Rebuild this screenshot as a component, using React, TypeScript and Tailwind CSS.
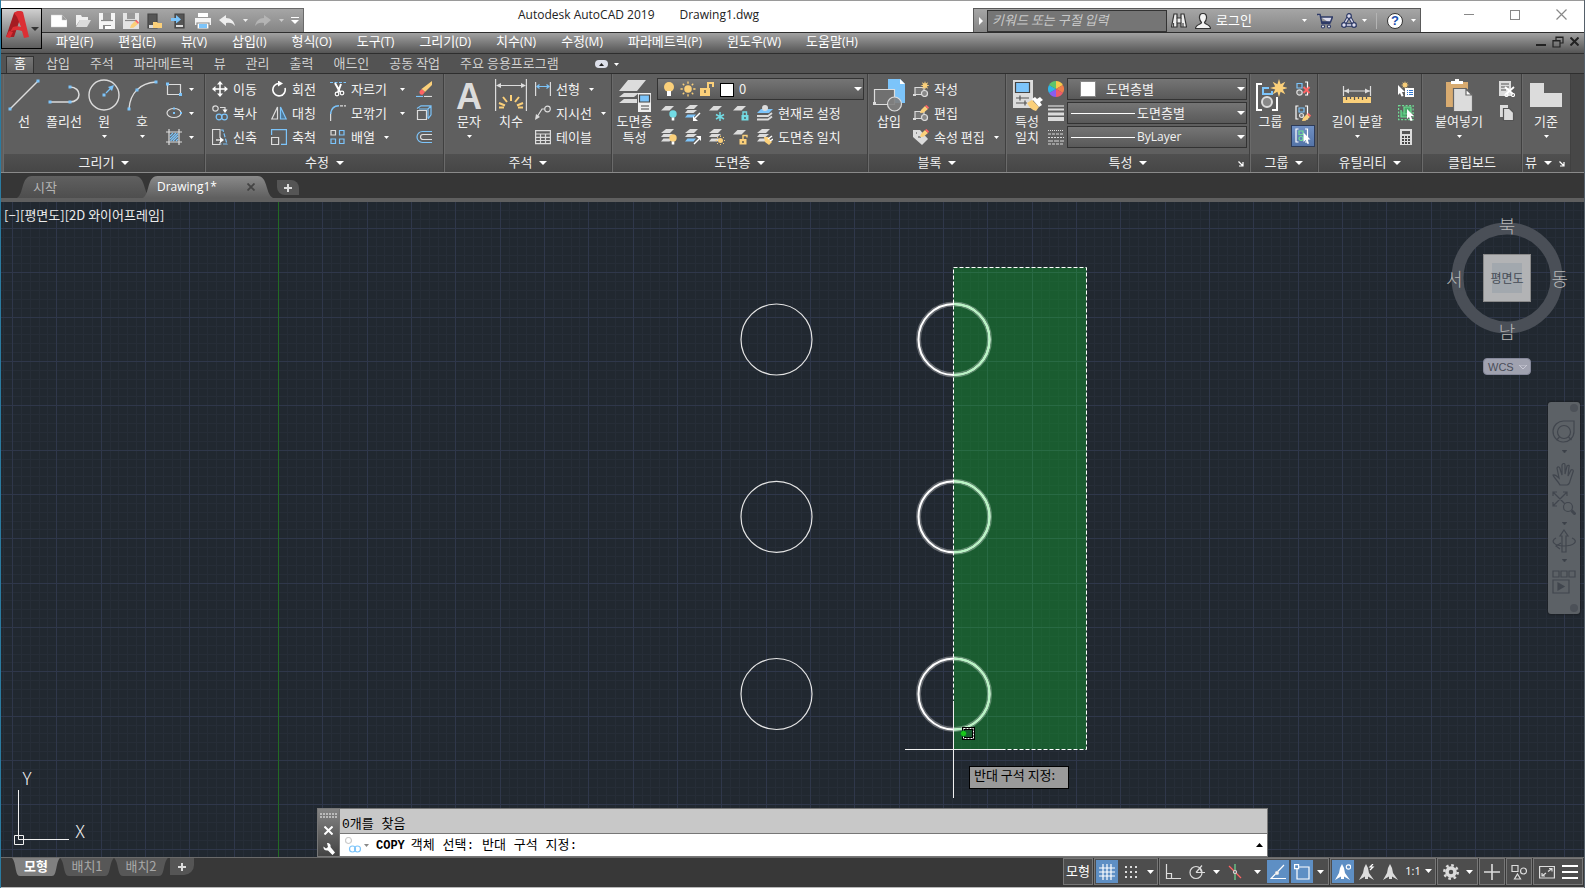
import type { ReactNode } from 'react';

const menus = [
  ['파일', '(F)'],
  ['편집', '(E)'],
  ['뷰', '(V)'],
  ['삽입', '(I)'],
  ['형식', '(O)'],
  ['도구', '(T)'],
  ['그리기', '(D)'],
  ['치수', '(N)'],
  ['수정', '(M)'],
  ['파라메트릭', '(P)'],
  ['윈도우', '(W)'],
  ['도움말', '(H)'],
];
const ribbonTabs = ['홈', '삽입', '주석', '파라메트릭', '뷰', '관리', '출력', '애드인', '공동 작업', '주요 응용프로그램'];

const L = '#dcdcdc';
const B = '#7cc4fa';
const Y = '#fbd07a';
const C = '#72dbe4';
const G = '#6fdc94';
const R = '#ff6464';

interface IconProps {
  children: ReactNode;
  className?: string;
  box?: string;
}

function Icon({ children, className = 'w-4 h-4', box = '0 0 16 16' }: IconProps) {
  return (
    <svg className={`${className} shrink-0`} viewBox={box} fill="none" stroke={L} strokeWidth="1.2" aria-hidden="true">
      {children}
    </svg>
  );
}

function Caret({ className = 'w-[5px] h-[3px] text-white' }: { className?: string }) {
  return (
    <svg className={`${className} shrink-0`} viewBox="0 0 8 4" preserveAspectRatio="none" fill="currentColor" aria-hidden="true">
      <path d="M0 0h8L4 4z" />
    </svg>
  );
}

/* ---------- shared icon parts ---------- */

const Dot = ({ x, y, s = 3 }: { x: number; y: number; s?: number }) => (
  <rect x={x - s / 2} y={y - s / 2} width={s} height={s} fill={B} stroke="none" />
);

const Burst = ({ x, y, r }: { x: number; y: number; r: number }) => (
  <g transform={`translate(${x} ${y}) scale(${r})`} fill={Y} stroke="none">
    <path d="M0-1 .18-.42.7-.7.42-.18 1 0 .42.18.7.7.18.42 0 1-.18.42-.7.7-.42.18-1 0-.42-.18-.7-.7-.18-.42z" />
  </g>
);

const Pencil = ({ x, y }: { x: number; y: number }) => (
  <g transform={`translate(${x} ${y})`} stroke="none">
    <path d="M0 8 1 5 5 1 8 4 3.500 7.800z" fill={Y} />
    <path d="M5 1 6.500 0 9 2.500 8 4z" fill={R} />
  </g>
);

const Sheets = ({ blue }: { blue?: boolean }) => (
  <g stroke="none">
    <path d="M5 0h8L9 4H0z" fill={L} />
    <path d="M2.500 5H12L8.500 8H0z" fill={L} />
    <path d="M2.500 9.500H11L8.500 12.500H0z" fill={blue ? B : L} />
  </g>
);

const Sheet = () => <path d="M4.500 1H13L8.500 5.500H0z" fill={L} stroke="none" />;

const Sun = ({ x, y, r, color = Y }: { x: number; y: number; r: number; color?: string }) => (
  <g transform={`translate(${x} ${y}) scale(${r})`} stroke={color} strokeWidth=".18">
    <circle r=".5" fill={color} stroke="none" />
    <path d="M0-1v.3M0 .7V1M-1 0h.3M.7 0H1M-.7-.7l.2.2M.5.500l.2.2M-.7.700l.2-.2M.5-.5l.2-.2" />
  </g>
);

const Bulb = ({ x, y, color }: { x: number; y: number; color: string }) => (
  <g transform={`translate(${x} ${y})`} stroke="none">
    <circle r="3.700" fill={color} />
    <rect x="-1.300" y="3.500" width="2.600" height="3" fill="#fff" />
  </g>
);

const Lock = ({ x, y, color, open }: { x: number; y: number; color: string; open?: boolean }) => (
  <g transform={`translate(${x} ${y})`}>
    <path d={open ? 'M3.500 0V-3.500h4V-1.500' : 'M1.500 0V-3h3.500V0'} stroke={color} strokeWidth="1.400" />
    <rect width="7" height="5.500" fill={color} stroke="none" />
    <path d="M3.500 2v2" stroke="#444" />
  </g>
);

const Arrow = ({ d }: { d: string }) => <path d={d} fill="#fff" stroke="none" />;

/* ---------- ribbon building blocks ---------- */

interface PanelProps {
  title: string;
  width: string;
  caret?: boolean;
  launcher?: boolean;
  narrow?: boolean;
  children: ReactNode;
}

function Panel({ title, width, caret = true, launcher, narrow, children }: PanelProps) {
  return (
    <section className={`${width} flex shrink-0 flex-col border-r border-[#404040] shadow-[inset_1px_0_0_#6a6a6a]`}>
      <div className="flex flex-1 pt-[3px]">{children}</div>
      <button className={`relative ml-px flex h-[18px] items-center justify-center gap-[7px] bg-linear-to-b from-[#505050] to-[#464646] pb-[2px] text-[#f0f0f0] ${narrow ? 'pr-4' : ''}`}>
        {title}
        {caret && <Caret className="mt-px h-1 w-2 text-white" />}
        {launcher && (
          <Icon className="absolute right-[5px] bottom-[5px] h-[6px] w-[6px]" box="0 0 6 6">
            <path d="M.5.500l4 4M5 1v4H1" stroke="#fff" />
          </Icon>
        )}
      </button>
    </section>
  );
}

interface BigButtonProps {
  icon: ReactNode;
  lines: string[];
  caret?: boolean;
  width: string;
}

function BigButton({ icon, lines, caret, width }: BigButtonProps) {
  return (
    <button className={`${width} flex shrink-0 flex-col items-center`}>
      {icon}
      <span className="whitespace-nowrap">
        {lines.map((line) => (
          <span key={line} className="block">{line}</span>
        ))}
      </span>
      {caret && <Caret className="mt-[6px] h-[3px] w-[5px] text-white" />}
    </button>
  );
}

interface RowButtonProps {
  icon: ReactNode;
  label?: string;
  caret?: boolean;
  wide?: boolean;
  title?: string;
}

function RowButton({ icon, label, caret, wide, title }: RowButtonProps) {
  return (
    <button aria-label={label ?? title} className={`flex h-6 items-center whitespace-nowrap ${label ? 'gap-[5px]' : 'gap-[3px]'}`}>
      {icon}
      {label && <span className="pb-px">{label}</span>}
      {caret && <Caret className={wide ? 'ml-2 h-[3px] w-[5px] text-white' : 'ml-1 h-[3px] w-[5px] text-white'} />}
    </button>
  );
}

function Column({ width, children }: { width?: string; children: ReactNode }) {
  return <div className={`${width ?? ''} flex shrink-0 flex-col items-start`}>{children}</div>;
}

/* ---------- ribbon panels ---------- */

function DrawPanel() {
  return (
    <Panel title="그리기" width="w-[202px]">
      <BigButton width="ml-px w-10" lines={['선']} icon={<Icon className="h-9 w-8" box="0 0 32 36"><path d="M2 32 30 4" strokeWidth="1.500" /><Dot x={2} y={32} /><Dot x={30} y={4} /></Icon>} />
      <BigButton width="w-10" lines={['폴리선']} icon={<Icon className="h-9 w-8" box="0 0 32 36"><path d="M2 25h20M22 10c12 0 12 15 0 15" strokeWidth="1.500" /><Dot x={2} y={25} /><Dot x={22} y={25} /><Dot x={22} y={10} /></Icon>} />
      <BigButton width="w-10" caret lines={['원']} icon={<Icon className="h-9 w-8" box="0 0 32 36"><circle cx="16" cy="18" r="15" strokeWidth="1.400" /><Dot x={16} y={18} /><path d="M18 16l6-6" stroke={B} /><path d="M26 8l-2 6-4-4z" fill={B} stroke="none" /></Icon>} />
      <BigButton width="w-9" caret lines={['호']} icon={<Icon className="h-9 w-8" box="0 0 32 36"><path d="M3 32C4 16 14 6 30 5" strokeWidth="1.400" /><Dot x={3} y={32} /><Dot x={11} y={13} /><Dot x={30} y={5} /></Icon>} />
      <Column width="pl-[6px]">
        <RowButton title="직사각형" caret icon={<Icon><path d="M1.500 3.500h13v10h-13z" /><Dot x={1.5} y={3} /><Dot x={14.5} y={13.5} /></Icon>} />
        <RowButton title="타원" caret icon={<Icon><ellipse cx="8" cy="8" rx="7" ry="4.500" /><Dot x={8} y={8} s={2} /><Dot x={15} y={8} s={2} /><Dot x={8} y={3.5} s={2} /></Icon>} />
        <RowButton title="해치" caret icon={<Icon><path d="M3 0v16M13 0v16M0 3h16M0 13h16" /><path d="M4 7l3-3M4 10l6-6M4.500 12 12 4.500M7 12l5-5M10 12l2-2" stroke={B} /></Icon>} />
      </Column>
    </Panel>
  );
}

function ModifyPanel() {
  return (
    <Panel title="수정" width="w-[239px]">
      <Column width="ml-[7px] w-[59px]">
        <RowButton label="이동" icon={<Icon><path d="M8 2v12M2 8h12" stroke="#fff" strokeWidth="1.500" /><Arrow d="M8 0l3 3.500H5zM8 16l3-3.500H5zM0 8l3.500-3v6zM16 8l-3.500-3v6z" /></Icon>} />
        <RowButton label="복사" icon={<Icon><circle cx="3.500" cy="3.500" r="2.700" /><path d="M8 2.500h5v3" /><Arrow d="M10.500 4.500h5L13 8z" /><circle cx="7" cy="12" r="2.800" stroke={B} /><circle cx="12.500" cy="12" r="2.800" stroke={B} /></Icon>} />
        <RowButton label="신축" icon={<Icon><path d="M8 9V.5H.5v15H8V13" /><path d="M4 11h5" stroke="#fff" /><Arrow d="M8 8l4 3-4 3z" /><path d="M9 1h2l4 14H9" stroke={B} strokeDasharray="4 1.500" /></Icon>} />
      </Column>
      <Column width="w-[59px]">
        <RowButton label="회전" icon={<Icon><path d="M8 2.500a6.200 6.200 0 1 0 6 4.500" stroke="#fff" strokeWidth="1.600" /><Arrow d="M7-.5l5 3-5 3z" /></Icon>} />
        <RowButton label="대칭" icon={<Icon><path d="M6.500 2v12H.8z" /><path d="M9.500 2v12h5.700z" stroke={B} fill="#4f7896" /></Icon>} />
        <RowButton label="축척" icon={<Icon><path d="M.6 6V.6h14.800v14.800H10" stroke={B} /><path d="M.6 8.500h7v7h-7z" /></Icon>} />
      </Column>
      <Column width="w-[85px]">
        <RowButton label="자르기" caret wide icon={<Icon><path d="M0 1.500h16" stroke={B} strokeDasharray="3 1.500" /><path d="M5 2l5 9M11 3l-3 8" stroke="#fff" strokeWidth="2" /><circle cx="7" cy="13" r="1.800" stroke="#fff" /><circle cx="12" cy="12" r="1.800" stroke="#fff" /></Icon>} />
        <RowButton label="모깎기" caret wide icon={<Icon><path d="M.6 16V8" /><path d="M.6 9C1 4 4 1 9 .8" stroke={B} strokeWidth="1.500" /><path d="M10 .8h6" strokeDasharray="3 1" /></Icon>} />
        <RowButton label="배열" caret icon={<Icon><path d="M1 1.500h4.500V6H1z" /><path d="M9.500 1.500H14V6H9.500zM1 10h4.500v4.500H1zM9.500 10H14v4.500H9.500z" stroke={B} /></Icon>} />
      </Column>
      <Column width="pl-px">
        <RowButton title="지우기" icon={<Icon><path d="M16 0v4L9 11 5.500 8z" fill={Y} stroke="none" /><path d="M5.500 8 9 11l-2 2.500c-2 1-4-.5-3.500-3z" fill={R} stroke="none" /><path d="M0 15.500h7" stroke={B} /><path d="M8 15.500h8" /></Icon>} />
        <RowButton title="분해" icon={<Icon><path d="M1.500 5.500h9v9h-9z" /><path d="M1 3.500 5 .8h10v9l-3 4M12 4l3-3M12 4H3M12 4v9" stroke={B} /></Icon>} />
        <RowButton title="간격띄우기" icon={<Icon><path d="M16 2.500H6.500a5.500 5.500 0 0 0 0 11H16" stroke={B} /><path d="M16 5.500H7a2.500 2.500 0 0 0 0 5h9" /></Icon>} />
      </Column>
    </Panel>
  );
}

function AnnotationPanel() {
  return (
    <Panel title="주석" width="w-[168px]">
      <BigButton width="ml-1 w-[42px]" caret lines={['문자']} icon={<span className="flex h-9 items-center pt-1 font-['Liberation_Sans'] text-[36px] leading-8 font-bold text-[#dcdcdc]">A</span>} />
      <BigButton width="w-[42px]" lines={['치수']} icon={<Icon className="h-9 w-8" box="0 0 32 36"><path d="M.6 2v32M31.400 2v32M2 8.500h28" /><path d="M1 8.500l5-2.500v5zM31 8.500l-5-2.500v5z" fill={L} stroke="none" /><path d="M16 18v6M8 20l4 5M24 20l-4 5M4 26l6 2.500M28 26l-6 2.500M4 30.500h5M23 30.500h5" stroke={Y} strokeWidth="2" /></Icon>} />
      <Column width="ml-[3px]">
        <RowButton label="선형" caret icon={<Icon><path d="M.6 1v14M15.400 1v14" /><path d="M2 5.500h12M4.500 3.500 2 5.500l2.500 2M11.500 3.500l2.500 2-2.500 2" stroke={B} /></Icon>} />
        <RowButton label="지시선" caret icon={<Icon><circle cx="12.500" cy="4" r="2.800" /><path d="M9.500 4H7L2 12" /><path d="M0 15l1-6 4 3z" fill={L} stroke="none" /></Icon>} />
        <RowButton label="테이블" icon={<Icon><path d="M.6 1.600h14.800v13H.6zM.6 5h14.800M.6 8.300h14.800M.6 11.500h14.800M5.500 5v9.500M10.500 5v9.500" /></Icon>} />
      </Column>
    </Panel>
  );
}

function LayersPanel() {
  return (
    <Panel title="도면층" width="w-[256px]">
      <BigButton
        width="w-[45px]"
        lines={['도면층', '특성']}
        icon={
          <Icon className="h-9 w-8" box="0 0 32 36">
            <g fill={L} stroke="none">
              <path d="M9 3h18L18 14H0zM5 16h15l-5 4H0zM5 22h13v4H0z" />
              <path d="M19 16h13v19H19z" fill="#eee" />
            </g>
            <path d="M20.500 18h10v7h-10z" fill={B} stroke="#444" />
            <path d="M22 29h8M22 32h8" stroke="#444" />
          </Icon>
        }
      />
      <div className="flex flex-1 flex-col pt-px">
        <div className="mr-[3px] flex h-[22px] items-center border border-[#333] bg-linear-to-b from-[#757575] to-[#595959] pl-1">
          <Icon className="h-5 w-[14px]" box="0 0 14 20"><circle cx="7" cy="8" r="5" fill={Y} stroke="none" /><path d="M5 12h4v5H5z" fill="#fff" stroke="none" /></Icon>
          <Icon className="ml-1 h-4 w-4"><Sun x={8} y={8} r={7.5} /></Icon>
          <Icon className="ml-[3px] h-4 w-4"><path d="M1 7h10v8H1z" fill={Y} stroke="none" /><path d="M9 7V2h5v4" stroke={Y} strokeWidth="2" /><path d="M6 9v3" stroke="#444" /></Icon>
          <span className="mt-px ml-[5px] h-[14px] w-[14px] border border-black bg-white" />
          <select aria-label="도면층" className="ml-[5px] flex-1 appearance-none bg-transparent pb-px outline-none">
            <option>0</option>
          </select>
          <Caret className="mr-[1px] h-1 w-2 text-white" />
        </div>
        <div className="mt-px flex h-6 items-center gap-2 pl-1">
          <Icon><Sheet /><Bulb x={12} y={9} color={C} /></Icon>
          <Icon><Sheets blue /><path d="M15 8l-5 5" stroke="#fff" strokeWidth="1.500" /><Arrow d="M8 16V11l5 5z" /></Icon>
          <Icon><Sheet /><path d="M11 7v9M7 9.500l8 4.500M15 9.500 7 14" stroke={C} strokeWidth="1.500" /></Icon>
          <Icon><Sheet /><Lock x={8.500} y={10} color={C} /></Icon>
          <RowButton label="현재로 설정" icon={<Icon><path d="M4 4h12l-4 4H0z" fill={B} stroke="none" /><circle cx="8" cy="3" r="3" fill={L} stroke="none" /><path d="M0 11h11l4-3M0 14.500h11l4-3" strokeWidth="1.800" /></Icon>} />
        </div>
        <div className="flex h-6 items-center gap-2 pl-1">
          <Icon><Sheets /><Bulb x={12} y={9} color={Y} /></Icon>
          <Icon><Sheets blue /><path d="M9 15l5-5" stroke="#fff" strokeWidth="1.500" /><Arrow d="M16 7v5l-5-5z" /></Icon>
          <Icon><Sheets /><Sun x={11.500} y={11.500} r={5} /></Icon>
          <Icon><Sheet /><Lock x={6.500} y={10} color={Y} open /></Icon>
          <RowButton label="도면층 일치" icon={<Icon><Sheets /><path d="M7 8l4 0 4 5-3 3-4-3z" fill={Y} stroke="none" /><path d="M11 10l4-3M13 12l3-2" stroke="#fff" strokeWidth="1.500" /></Icon>} />
        </div>
      </div>
    </Panel>
  );
}

const BlockBase = () => (
  <>
    <path d="M2 6.500h9v7H2z" fill="#777" />
    <path d="M0 13h3v2H0z" fill={L} stroke="none" />
    <circle cx="11.500" cy="12.500" r="3" fill="#888" />
  </>
);

function BlockPanel() {
  return (
    <Panel title="블록" width="w-[138px]">
      <BigButton width="w-[42px]" lines={['삽입']} icon={<Icon className="h-9 w-8" box="0 0 32 36"><path d="M15 2h12l5 5v19H15z" fill={B} stroke="none" /><path d="M27 2v5h5z" fill="#fff" stroke="none" /><path d="M1.500 12.500h20v15h-20z" fill="#707070" /><circle cx="21.500" cy="27" r="7" fill="#808080" fillOpacity=".9" /><path d="M0 25h3v3H0z" fill={L} stroke="none" /></Icon>} />
      <Column width="ml-[3px]">
        <RowButton label="작성" icon={<Icon><BlockBase /><Burst x={12} y={4.500} r={4.500} /></Icon>} />
        <RowButton label="편집" icon={<Icon><BlockBase /><Pencil x={7} y={0} /></Icon>} />
        <RowButton label="속성 편집" caret icon={<Icon><path d="M0 1h7l8 9-6 6-9-8z" fill={L} stroke="none" /><path d="M3 4h1M5 8h3" stroke="#444" /><Pencil x={7} y={0} /></Icon>} />
      </Column>
    </Panel>
  );
}

function PropertySelect({ label, value, swatch }: { label: string; value: string; swatch?: boolean }) {
  return (
    <div className="flex h-6 items-center">
      <div className="mr-[2px] flex h-[22px] flex-1 items-center border border-[#333] bg-linear-to-b from-[#757575] to-[#595959] pl-[3px]">
        {swatch ? <span className="mr-[10px] ml-[9px] h-4 w-4 border border-[#888] bg-white" /> : <span className="mr-[2px] h-px w-16 bg-white" />}
        <select aria-label={label} className={`min-w-0 flex-1 appearance-none bg-transparent pb-px outline-none ${value === 'ByLayer' ? "font-['Open_Sans'] text-xs" : ''}`}>
          <option>{value}</option>
        </select>
        <Caret className="mr-[1px] h-1 w-2 text-white" />
      </div>
    </div>
  );
}

function PropertiesPanel() {
  const wheel = ['#f9c84a', '#ef7d4b', '#ef5b6b', '#8a5cf0', '#30b5e8', '#5fc46b'];
  return (
    <Panel title="특성" width="w-[244px]" launcher>
      <BigButton
        width="w-[42px]"
        lines={['특성', '일치']}
        icon={
          <Icon className="h-9 w-8" box="0 0 32 36">
            <path d="M2 3h20v28H2z" fill={L} stroke="none" />
            <path d="M4.500 5.500h14v10h-14z" fill={B} stroke="#444" />
            <path d="M5 21h13M5 26h11M9 18.500v5M14 23.500v5" stroke="#555" />
            <path d="M16 26l5-3 7 7-3 4c-4-1-7-4-9-8z" fill={Y} stroke="none" />
            <path d="M21 22l3-2 2 2 3-2 3 3-3 2 2 3-3 2z" fill="#fff" stroke="none" />
          </Icon>
        }
      />
      <div className="flex w-[19px] flex-col">
        <RowButton title="색상" icon={<Icon>{wheel.map((c, i) => <path key={c} d="M8 8V0A8 8 0 0 1 14.900 4z" fill={c} stroke="none" transform={`rotate(${i * 60} 8 8)`} />)}</Icon>} />
        <RowButton title="선가중치" icon={<Icon><path d="M0 1h16" /><path d="M0 4.500h16" strokeWidth="2" /><path d="M0 9h16" strokeWidth="3" /><path d="M0 14h16" strokeWidth="4" /></Icon>} />
        <RowButton title="선종류" icon={<Icon><path d="M0 1.500h16" strokeDasharray="1 1" /><path d="M0 5h16" strokeDasharray="3 1" /><path d="M0 8.500h16" strokeDasharray="2 1" /><path d="M0 12h16" strokeDasharray="5 1" /><path d="M0 15h16" strokeDasharray="3 1" /></Icon>} />
      </div>
      <div className="flex flex-1 flex-col">
        <PropertySelect label="색상" value="도면층별" swatch />
        <PropertySelect label="선가중치" value="도면층별" />
        <PropertySelect label="선종류" value="ByLayer" />
      </div>
    </Panel>
  );
}

const Brackets = () => <path d="M3.500 1H1v13h2.500M10 1h2.500v13H10" stroke="#fff" />;

function GroupPanel() {
  return (
    <Panel title="그룹" width="w-[68px]">
      <BigButton width="w-[41px]" lines={['그룹']} icon={<Icon className="h-9 w-8" box="0 0 32 36"><path d="M7 7H2v26h5M17 33h5V20" stroke="#fff" strokeWidth="2" /><path d="M14 11H8v6h9v-3" stroke={B} strokeWidth="2" /><circle cx="12" cy="25" r="5" fill="#888" strokeWidth="2" /><Burst x={24} y={11} r={9} /></Icon>} />
      <Column>
        <span className="px-1"><RowButton title="그룹 해제" icon={<Icon><path d="M10 1h2.500v13H10" stroke="#fff" /><path d="M2 2.500h5V7H2z" stroke={B} /><circle cx="4.500" cy="11.500" r="2.700" fill="#777" /><path d="M8.500 6l6 6M14.500 6l-6 6" stroke={R} strokeWidth="2" /></Icon>} /></span>
        <span className="px-1"><RowButton title="그룹 편집" icon={<Icon><Brackets /><path d="M4 3h5v4H4z" stroke={B} /><circle cx="6.500" cy="10.500" r="2" fill="#777" /><Pencil x={7} y={8} /></Icon>} /></span>
        <span className="border border-[#2d3b58] bg-linear-to-b from-[#7090c4] to-[#5474a8] px-[3px]">
          <button aria-label="그룹 선택" className="flex h-5 items-center"><Icon><Brackets /><path d="M4 3h4v3.500H4z" stroke={G} /><circle cx="6" cy="10.500" r="2" stroke={G} /><Arrow d="M8.500 4.500l7 7h-3l1.500 4-1.500.5-1.700-4-2.300 2z" /></Icon></button>
        </span>
      </Column>
    </Panel>
  );
}

function UtilitiesPanel() {
  return (
    <Panel title="유틸리티" width="w-[104px]">
      <BigButton width="ml-[9px] w-[60px]" caret lines={['길이 분할']} icon={<Icon className="h-9 w-8" box="0 0 32 36"><path d="M2.500 9v10M29.500 9v10M3 14h26" /><path d="M3 14l5-2.500v5zM29 14l-5-2.500v5z" fill={L} stroke="none" /><path d="M2 20h28v6H2z" fill={Y} stroke="none" /><path d="M5.500 20v3M9.500 20v2M13.500 20v3M17.500 20v2M21.500 20v3M25.500 20v2" stroke="#555" /></Icon>} />
      <Column width="ml-[11px]">
        <RowButton title="신속 선택" icon={<Icon><Burst x={7} y={4} r={4} /><Arrow d="M0 4l7 7H4l1.500 4-2 .5L2 12l-2 2z" /><path d="M7 7h9v9H7z" fill="#fff" stroke="none" /><path d="M9 9.500h1M9 11.500h1M9 13.500h1M11 9.500h4M11 11.500h4M11 13.500h4" stroke="#37c" /></Icon>} />
        <RowButton title="모두 선택" icon={<Icon><path d="M.6.600h14.500v14H.6z" stroke={G} strokeDasharray="2 1.500" /><path d="M6 2h7v7H6zM3 5v7h7" stroke={G} fill="#4aa86a" /><Arrow d="M9 4l7 7h-3l1.500 4.500-2 .5-1.500-4-2 2z" /></Icon>} />
        <RowButton title="계산기" icon={<Icon><path d="M2 0h12v16H2z" fill={L} stroke="none" /><path d="M4 2h8v3H4z" fill="#555" stroke="none" /><path d="M4 8h8M4 11h8M4 14h8" stroke="#444" strokeWidth="2" strokeDasharray="2 1" /></Icon>} />
      </Column>
    </Panel>
  );
}

function ClipboardPanel() {
  return (
    <Panel title="클립보드" width="w-[100px]" caret={false}>
      <BigButton width="ml-2 w-[58px]" caret lines={['붙여넣기']} icon={<Icon className="h-9 w-8" box="0 0 32 36"><path d="M3 5h22v25H3z" fill="#d8ab70" stroke="none" /><path d="M8 7V4h4V2h4v2h4v3z" fill="#fff" stroke="none" /><path d="M10.500 11.500H23l6.500 6.500v16.500h-19z" fill={L} stroke="#666" /><path d="M23 12v6h6z" fill="#fff" stroke="#666" /></Icon>} />
      <Column width="ml-[11px]">
        <RowButton title="잘라내기" icon={<Icon><path d="M0 0h12v15H0z" fill={L} stroke="none" /><path d="M2 3h8M2 6h8M2 9h5" stroke="#555" /><path d="M6 6l8 7M15 6l-8 7" stroke="#fff" strokeWidth="1.800" /><circle cx="7.500" cy="14" r="1.500" stroke="#fff" /><circle cx="14" cy="14" r="1.500" stroke="#fff" /></Icon>} />
        <RowButton title="복사" icon={<Icon><path d="M1 0h8v12H1z" fill={L} stroke="none" /><path d="M4.500 3.500h6l4 4v8h-10z" fill={L} stroke="#555" /></Icon>} />
      </Column>
    </Panel>
  );
}

function ViewPanel() {
  return (
    <Panel title="뷰" width="w-[49px]" launcher narrow>
      <BigButton width="w-12" caret lines={['기준']} icon={<Icon className="h-9 w-8" box="0 0 32 36"><path d="M0 6h14v10h18v14H0z" fill={L} stroke="none" /></Icon>} />
    </Panel>
  );
}

/* ---------- title bar ---------- */

const quickIcons: { name: string; art: ReactNode }[] = [
  { name: '새로 만들기', art: <path d="M0 2h11l5 5v7H0zM11 2v5h5" fill="#fff" stroke="#ccc" strokeWidth=".5" /> },
  { name: '열기', art: <><path d="M1 13V2h5l1 2h6v3H5z" fill="#f0f0f0" stroke="none" /><path d="M5 7h11l-4 7H1z" fill="#dcdcdc" stroke="none" /></> },
  { name: '저장', art: <><path d="M0 0h16v16H0z" fill="#f4f4f4" stroke="none" /><path d="M4 0h8v7H4z" fill="#999" stroke="none" /><path d="M2 7.500h12" stroke="#888" /><path d="M4 12h8v4H4z" fill="#888" stroke="none" /><path d="M6 13h6v3H6z" fill="#fff" stroke="none" /></> },
  { name: '다른 이름으로 저장', art: <><path d="M0 0h16v16H0z" fill="#e4e4e4" stroke="none" /><path d="M4 0h8v6H4z" fill="#999" stroke="none" /><path d="M2 7.500h12" stroke="#888" /><Pencil x={7} y={7} /></> },
  { name: '웹에서 열기', art: <><path d="M1 1h9v14H1z" fill="#555" stroke="#444" /><path d="M2 12h8v3H2z" fill="#ddd" stroke="none" /><path d="M6 9h4l1 1h4v5H6z" fill={Y} stroke="none" /></> },
  { name: '웹에 저장', art: <><path d="M4 1h9v14H4z" fill="#555" stroke="#444" /><path d="M5 12h7v2H5z" fill="#ddd" stroke="none" /><path d="M0 5h5V2l5 4.500-5 4V8H0z" fill={B} stroke="none" /></> },
  { name: '인쇄', art: <><path d="M3 0h10v4H3z" fill="#fff" stroke="none" /><path d="M0 5h16v7H0z" fill="#f4f4f4" stroke="none" /><path d="M2 10h12v6H2z" fill="#fff" stroke="#888" /><path d="M4 11h8v4H4z" fill={B} stroke="none" /></> },
];

function QuickAccess() {
  return (
    <div className="flex h-6 items-center self-end border-t border-r border-[#6a6a6a] bg-linear-to-b from-[#a6a6a6] to-[#858585] pl-[46px]">
      {quickIcons.map(({ name, art }) => (
        <button key={name} aria-label={name} className="flex w-6 justify-center">
          <Icon>{art}</Icon>
        </button>
      ))}
      <button aria-label="명령취소" className="flex w-6 justify-center"><Icon><path d="M0 7l7-5v3c5 0 8 3 9 8-2-3-5-4-9-3v3z" fill="#eee" stroke="none" /></Icon></button>
      <button aria-label="명령취소 목록" className="flex w-3 justify-center"><Caret className="h-[3px] w-[5px] text-[#eee]" /></button>
      <button aria-label="명령복구" className="flex w-6 justify-center"><Icon><path d="M16 7 9 2v3C4 5 1 8 0 13c2-3 5-4 9-3v3z" fill="#b4b4b4" stroke="none" /></Icon></button>
      <button aria-label="명령복구 목록" className="flex w-3 justify-center"><Caret className="h-[3px] w-[5px] text-[#ccc]" /></button>
      <button aria-label="사용자화" className="flex w-4 flex-col items-center gap-[2px]"><span className="h-px w-2 bg-white" /><Caret className="h-1 w-2 text-white" /></button>
    </div>
  );
}

function InfoCenter() {
  return (
    <div className="flex h-6 items-center self-end border border-b-0 border-[#5a5a5a] bg-linear-to-b from-[#a6a6a6] to-[#858585] text-white">
      <button aria-label="축소" className="flex w-[13px] justify-center">
        <svg className="h-2 w-1" viewBox="0 0 4 8" fill="#fff"><path d="M0 0l4 4-4 4z" /></svg>
      </button>
      <input aria-label="검색" placeholder="키워드 또는 구절 입력" className="h-[22px] w-[180px] border border-[#333] bg-[#757575] px-1 pb-[2px] italic outline-none placeholder:text-[#c8c8c8]" />
      <button aria-label="찾기" className="ml-1">
        <Icon><path d="M3 1h3v4h4V1h3l2.500 13H10v-4H6v4H.5z" fill="#eee" stroke="#333" /><path d="M2.500 10v4M12 10v4M6 5v5M10 5v5" stroke="#444" /></Icon>
      </button>
      <button className="ml-2 flex items-center gap-[5px]">
        <Icon><path d="M8 .5c3 0 3.700 2 3.500 4.500C11.300 7.500 10 9 9.500 9.500c0 2 6 1.500 6 6H.5c0-4.500 6-4 6-6C6 9 4.700 7.500 4.500 5 4.300 2.500 5 .5 8 .5z" fill="#f4f4f4" stroke="#333" /></Icon>
        <span className="pb-[2px]">로그인</span>
      </button>
      <button aria-label="계정" className="ml-[46px] flex w-3 justify-center"><Caret /></button>
      <button aria-label="스토어" className="ml-[7px]">
        <Icon><path d="M0 1.500h3l2 9h8.500M4 4h11.500l-2 5H5" fill="#dde" stroke="#2e3a66" strokeWidth="1.500" /><circle cx="6" cy="13.500" r="1.500" fill="#fff" stroke="#2e3a66" /><circle cx="12" cy="13.500" r="1.500" fill="#fff" stroke="#2e3a66" /></Icon>
      </button>
      <button aria-label="연결" className="ml-2 flex items-center gap-[5px]">
        <Icon><path d="M8 3 3 12h10z" stroke="#2e3a66" strokeWidth="3.500" /><path d="M8 3 3 12h10z" stroke="#dde" strokeWidth="1.500" /><circle cx="8" cy="3" r="2.300" fill="#dde" stroke="#2e3a66" /><circle cx="3" cy="12" r="2.300" fill="#dde" stroke="#2e3a66" /><circle cx="13" cy="12" r="2.300" fill="#dde" stroke="#2e3a66" /></Icon>
        <Caret />
      </button>
      <span className="mr-[10px] ml-[9px] h-4 w-px bg-[#b4b4b4]" />
      <button aria-label="도움말" className="flex items-center gap-2 pr-1">
        <span className="flex h-4 w-4 items-center justify-center rounded-full border border-[#333] bg-white font-['Liberation_Sans'] text-[13px] leading-none font-bold text-[#1c4fb0]">?</span>
        <Caret />
      </button>
    </div>
  );
}

function TitleBar() {
  return (
    <header className="relative flex h-8 border-t border-[#9a9a9a] bg-white">
      <button aria-label="응용프로그램 메뉴" className="absolute top-[7px] left-0 z-10 flex h-[41px] w-[41px] items-center justify-between border border-black bg-linear-to-b from-[#d0d0d0] to-[#5e5e5e] pr-[2px] pb-2 pl-1">
        <svg className="h-7 w-6" viewBox="0 0 24 28" aria-hidden="true">
          <path d="M0 26 8 2l5-2 2 5-7 21z" fill="#a51c22" />
          <path d="M8 2c2-2 6-3 9-1l6 25-5 1-2-7c-5-2-9-1-12 1l3-5c3-1 5-1 8 0L11 6z" fill="#dc2f34" />
          <path d="M0 26l4 1 3-6-4-1z" fill="#dc2f34" />
        </svg>
        <Caret className="mt-2 h-1 w-2 text-[#333]" />
      </button>
      <QuickAccess />
      <h1 className="flex-1 pt-1 text-center font-['Open_Sans'] text-xs leading-5 whitespace-pre text-[#222]">{'Autodesk AutoCAD 2019        Drawing1.dwg'}</h1>
      <InfoCenter />
      <div className="flex pb-1 pl-[25px]">
        <button aria-label="최소화" className="flex w-[46px] items-center justify-center"><span className="h-px w-[10px] bg-[#888]" /></button>
        <button aria-label="최대화" className="flex w-[46px] items-center justify-center"><span className="h-[10px] w-[10px] border border-[#888]" /></button>
        <button aria-label="닫기" className="flex w-[46px] items-center justify-center"><Icon className="h-[11px] w-[11px]" box="0 0 11 11"><path d="M.5.500l10 10M10.500.500l-10 10" stroke="#888" /></Icon></button>
      </div>
    </header>
  );
}

function MenuBar() {
  return (
    <nav className="flex h-[22px] items-center gap-[25px] border-y border-[#2e2e2e] bg-linear-to-b from-[#a2a2a2] to-[#555] pr-[5px] pb-[3px] pl-[55px] text-white">
      {menus.map(([name, key]) => (
        <button key={name}>
          {name}
          <span className="font-['Open_Sans'] text-xs leading-4">{key}</span>
        </button>
      ))}
      <div className="ml-auto flex items-center gap-[6px]">
        <button aria-label="도면 최소화" className="mt-[6px] h-[2px] w-[10px] bg-[#222]" />
        <button aria-label="도면 복원"><Icon className="h-3 w-3" box="0 0 12 12"><path d="M4 4V1h7v6H8M1 4.500h7V11H1zM4 1.500h7M1 5h7" stroke="#222" /></Icon></button>
        <button aria-label="도면 닫기"><Icon className="h-[9px] w-[9px]" box="0 0 9 9"><path d="M.5.500l8 8M8.500.500l-8 8" stroke="#222" strokeWidth="2" /></Icon></button>
      </div>
    </nav>
  );
}

function RibbonTabs() {
  return (
    <nav className="flex h-[19px] items-end gap-1 bg-[#535353] pl-[5px] text-[#d0d0d0]">
      {ribbonTabs.map((tab, i) => (
        <button key={tab} className={i === 0 ? 'flex h-[17px] items-center border border-b-0 border-[#333] bg-linear-to-b from-[#777] to-[#5f5f5f] px-[7px] pb-1 text-white' : 'flex h-[17px] items-center px-2 pb-[3px]'}>
          {tab}
        </button>
      ))}
      <button aria-label="리본 최소화" className="ml-6 flex h-[18px] items-center gap-[6px]">
        <span className="flex h-2 w-[13px] items-center justify-center rounded-sm bg-[#dde0ea]"><Caret className="h-[3px] w-[5px] rotate-180 text-[#222]" /></span>
        <Caret />
      </button>
    </nav>
  );
}

/* ---------- drawing area ---------- */

function DocTab({ label, active }: { label: string; active?: boolean }) {
  return (
    <div className={`relative flex h-[22px] items-center justify-between ${active ? "-ml-2 w-[130px] pr-[18px] pl-[14px] font-['Open_Sans'] text-xs text-white" : 'w-[134px] pr-[22px] pl-4 text-[#b4b4b4]'}`}>
      <svg className="absolute inset-0 h-full w-full" viewBox="0 0 134 22" preserveAspectRatio="none" aria-hidden="true">
        <defs>
          <linearGradient id={active ? 'tab-on' : 'tab-off'} x2="0" y2="1">
            <stop stopColor={active ? '#8a8a8a' : '#606060'} />
            <stop offset="1" stopColor={active ? '#5f5f5f' : '#4e4e4e'} />
          </linearGradient>
        </defs>
        <path d="M0 22C7 18 4 0 15 0h103c11 0 8 18 16 22z" fill={active ? 'url(#tab-on)' : 'url(#tab-off)'} />
      </svg>
      <button className="relative pb-px">{label}</button>
      {active && (
        <button aria-label="탭 닫기" className="relative"><Icon className="h-2 w-2" box="0 0 8 8"><path d="M.5.500l7 7M7.500.500l-7 7" stroke="#444" strokeWidth="1.800" /></Icon></button>
      )}
    </div>
  );
}

const STEP = 133 / 3;

function gridLines(start: number, step: number, end: number, vertical: boolean) {
  let d = '';
  for (let p = start; p < end; p += step) {
    const at = Math.round(p) + 0.5;
    d += vertical ? `M${at} 0V3000` : `M0 ${at}H4000`;
  }
  return d;
}

const minorGrid = gridLines(11 - STEP, STEP / 5, 4000, true) + gridLines(26 - STEP, STEP / 5, 3000, false);
const majorGrid = gridLines(11, STEP, 4000, true) + gridLines(26, STEP, 3000, false);
const rows = [137.5, 314.8, 492];

function Drawing() {
  return (
    <svg className="absolute inset-0 h-full w-full" fill="none" aria-hidden="true">
      <path d={minorGrid} stroke="#262d37" />
      <path d={majorGrid} stroke="#2f374a" />
      <path d="M277.500 0V3000" stroke="#226a22" />
      <clipPath id="picked">
        <rect x="953" y="66" width="133" height="482" />
      </clipPath>
      <rect x="952.500" y="65.500" width="133" height="482" fill="#1a5c30" />
      <g clipPath="url(#picked)">
        <path d={minorGrid} stroke="#1d5f34" />
        <path d={majorGrid} stroke="#286a44" />
      </g>
      {rows.map((y) => (
        <g key={y}>
          <circle cx="775.500" cy={y} r="35.500" stroke="#e4e4e4" strokeWidth="1.200" />
          <circle cx="953" cy={y} r="35.500" stroke="#fff" strokeOpacity=".3" strokeWidth="5" />
          <circle cx="953" cy={y} r="35.500" stroke="#fff" strokeWidth="2" />
          <circle cx="953" cy={y} r="35.500" stroke="#b6f5c2" strokeWidth="2" clipPath="url(#picked)" />
        </g>
      ))}
      <rect x="952.500" y="65.500" width="133" height="482" stroke="#fff" strokeDasharray="4 2" />
      <path d="M904 547.500h98M952.500 499v97" stroke="#f0f0f0" />
      <rect x="962.500" y="526.500" width="10" height="10" stroke="#000" strokeWidth="3" />
      <rect x="962.500" y="526.500" width="10" height="10" stroke="#fff" strokeDasharray="2 1" />
      <circle cx="962.500" cy="531.500" r="3" fill="#19c819" stroke="#053" strokeWidth=".5" />
    </svg>
  );
}

function ViewCube() {
  return (
    <div className="absolute top-[14px] right-[16px] grid h-[124px] w-[122px] grid-cols-3 grid-rows-3 place-items-center text-[18px] leading-none font-light text-[#b8b8b8]">
      <svg className="absolute inset-0 h-full w-full" viewBox="0 0 122 124" fill="none" aria-hidden="true">
        <circle cx="61" cy="62" r="49.500" stroke="#4a4f57" strokeWidth="12" />
      </svg>
      <button className="relative col-start-2 self-start">북</button>
      <button className="relative col-start-1 row-start-2 justify-self-start">서</button>
      <button className="relative col-start-2 row-start-2 flex h-12 w-12 items-center justify-center border border-[#8a8a8a] bg-[#b2b3b5]">
        <span className="flex h-[30px] w-[30px] items-center justify-center bg-[#a2a8ae] text-[12px] font-normal whitespace-nowrap text-[#444b55]">평면도</span>
      </button>
      <button className="relative col-start-3 row-start-2 justify-self-end">동</button>
      <button className="relative col-start-2 row-start-3 self-end">남</button>
    </div>
  );
}

function NavBar() {
  const glyph = 'w-6 h-6';
  return (
    <div className="absolute top-[200px] right-1 flex h-[212px] w-8 flex-col items-center rounded-[3px] bg-[#5c6166] pt-[18px] shadow-[0_0_2px_#111] [&_svg]:stroke-[#41464e]">
      <span className="absolute top-[2px] right-[2px] h-2 w-2 rounded-full bg-[#4c5158]" />
      <button aria-label="휠"><Icon className={glyph} box="0 0 24 24"><path d="M12 1h10v11a10.500 10.500 0 1 1-10-11z" /><circle cx="12" cy="12" r="6.500" /><path d="M7.500 17l-3 3M16.500 17l3 3" /></Icon></button>
      <Caret className="mt-[6px] h-[3px] w-[5px] text-[#3a3f47]" />
      <button aria-label="초점이동" className="mt-[10px]"><Icon className={glyph} box="0 0 24 24"><path d="M8 22C6 18 2 15 1 12c2-1 4 1 6 3L5 5c1-2 3-1 3 1l2 6V2c1-2 3-2 3 0v9l2-8c1-1 3-1 2 1l-1 9 3-6c1-1 3 0 2 2l-3 9c0 2-2 4-3 4z" /></Icon></button>
      <button aria-label="줌" className="mt-1"><Icon className={glyph} box="0 0 24 24"><path d="M1 1l14 14M15 1 1 15M1 5V1h4M11 1h4v4M1 11v4h4" /><circle cx="16" cy="16" r="4.500" fill="#5c6166" /><path d="M19.500 19.500l4 4" strokeWidth="3" /></Icon></button>
      <Caret className="mt-[7px] h-[3px] w-[5px] text-[#3a3f47]" />
      <button aria-label="궤도" className="mt-1"><Icon className={glyph} box="0 0 24 24"><path d="M12 1l4 6h-2v16h-4V7H8z" /><path d="M4 9c-6 3-2 8 8 8s15-5 8-8M9 14l-5 3 4 3" /></Icon></button>
      <Caret className="mt-[6px] h-[3px] w-[5px] text-[#3a3f47]" />
      <button aria-label="ShowMotion" className="mt-2"><Icon className={glyph} box="0 0 24 24"><path d="M1 1h6v6H1zM9 1h6v6H9zM17 1h6v6h-6zM1 10h16v13H1z" /><path d="M6 13l6 3.500-6 3.500z" fill="#41464e" /></Icon></button>
      <span className="absolute right-[2px] bottom-[2px] h-2 w-2 rounded-full bg-[#4c5158]" />
    </div>
  );
}

function CommandLine() {
  return (
    <div className="absolute right-[316px] bottom-0 left-[316px] flex h-[49px] border border-[#777] bg-white font-['Liberation_Mono','Noto_Sans_CJK_KR',monospace] text-black">
      <div className="flex w-[22px] flex-col items-center gap-[8px] overflow-hidden border-r border-[#777] bg-linear-to-b from-[#858585] to-[#444] pt-1">
        <Icon className="h-[5px] w-[17px]" box="0 0 17 5"><path d="M0 1h17M0 4h17" strokeWidth="2" strokeDasharray="2 1" stroke="#bbb" /></Icon>
        <button aria-label="명령행 닫기"><Icon className="h-[9px] w-[9px]" box="0 0 9 9"><path d="M.5.500l8 8M8.500.500l-8 8" stroke="#fff" strokeWidth="2" /></Icon></button>
        <button aria-label="사용자화"><Icon className="h-3 w-3" box="0 0 12 12"><path d="M4 0c3 0 4 2 3.500 4L12 9.500 9.500 12 5 7.500C2 8 0 6 .500 3.500L3 5.500 5 4z" fill="#fff" stroke="none" /></Icon></button>
      </div>
      <div className="flex min-w-0 flex-1 flex-col">
        <p className="flex-1 bg-[#c8c8c8] pt-2 pl-[2px] leading-4">0개를 찾음</p>
        <div className="flex h-[23px] items-center border-t border-[#777] pl-[5px]">
          <Icon className="h-4 w-4"><circle cx="3.500" cy="3.500" r="3" stroke="#ccc" /><circle cx="7.500" cy="12" r="3" stroke={B} /><circle cx="12.500" cy="12" r="3" stroke={B} /></Icon>
          <Caret className="ml-[3px] h-[3px] w-[5px] text-[#888]" />
          <label htmlFor="command" className="ml-[7px] pt-px whitespace-nowrap">
            <b className="mr-[6px] text-[12px]">COPY</b>객체 선택: 반대 구석 지정:
          </label>
          <input id="command" className="min-w-0 flex-1 bg-transparent pl-1 outline-none" />
          <Caret className="mr-1 h-1 w-[7px] rotate-180 text-black" />
        </div>
      </div>
    </div>
  );
}

function Canvas() {
  return (
    <main className="relative min-h-[640px] flex-1 overflow-hidden bg-[#212830]">
      <Drawing />
      <p className="relative pt-[5px] pl-[3px] text-[#ececec]">[−][평면도][2D 와이어프레임]</p>
      <ViewCube />
      <button className="absolute top-[156px] right-[53px] flex h-[17px] w-12 items-center gap-[5px] rounded-sm border border-[#85889a] bg-[#a0a2b0] pl-1 font-['Liberation_Sans'] text-[11px] text-[#4a4d58]">
        WCS
        <svg className="h-1 w-2" viewBox="0 0 8 4" fill="none" stroke="#c8c8d4"><path d="M0 0h8L4 4z" /></svg>
      </button>
      <NavBar />
      <div className="absolute top-[564px] left-[968px] h-[23px] border border-black bg-[#9a9a9a] pr-[13px] pl-1 leading-4 text-black">반대 구석 지정:</div>
      <svg className="absolute bottom-[5px] left-3 h-[94px] w-20 font-light" viewBox="0 0 80 94" fill="none" stroke="#f0f0f0" aria-hidden="true">
        <path d="M5.500 32v49.500H56M1.500 77.500h9v9h-9z" />
        <text x="14" y="27" textAnchor="middle" fontSize="18" fill="#f0f0f0" stroke="none">Y</text>
        <text x="67" y="80" textAnchor="middle" fontSize="18" fill="#f0f0f0" stroke="none">X</text>
      </svg>
      <CommandLine />
    </main>
  );
}

/* ---------- status bar ---------- */

function LayoutTab({ label, active }: { label: string; active?: boolean }) {
  return (
    <button className={`relative flex h-[18px] items-center justify-center pb-[3px] ${active ? 'w-12 font-bold text-white' : 'w-[54px] text-[#a8a8a8]'}`}>
      <svg className="absolute inset-0 h-full w-full" viewBox="0 0 54 18" preserveAspectRatio="none" aria-hidden="true">
        <path d="M0 0c5 4 3 18 9 18h36c6 0 4-14 9-18z" fill={active ? '#808080' : '#575757'} />
      </svg>
      <span className="relative">{label}</span>
    </button>
  );
}

function StatusGroup({ children }: { children: ReactNode }) {
  return <div className="flex h-[27px] items-center border border-[#777] bg-[#4d4d4d] px-px">{children}</div>;
}

function StatusButton({ name, on, width = 'w-6', children }: { name: string; on?: boolean; width?: string; children: ReactNode }) {
  return (
    <button aria-label={name} aria-pressed={on} className={`${width} flex h-[23px] items-center justify-center ${on ? 'bg-[#5e8fc4]' : ''}`}>
      {children}
    </button>
  );
}

const Person = ({ color, children }: { color: string; children?: ReactNode }) => (
  <Icon><path d="M7 0 9 4l1 5 5 7-6-3.500V15H6v-2.500L0 16l4-7 1-5z" fill={color} stroke="none" />{children}</Icon>
);

function StatusBar() {
  const arrow = <Caret className="h-1 w-[7px] text-white" />;
  return (
    <footer className="flex h-[31px] border-t border-b border-t-[#6a6a6a] border-b-[#b8b8b8] bg-[#383838]">
      <div className="flex items-start pl-[11px]">
        <LayoutTab label="모형" active />
        <LayoutTab label="배치1" />
        <LayoutTab label="배치2" />
        <button aria-label="새 배치" className="ml-[2px] flex h-[17px] w-6 items-center justify-center rounded-br-[10px] bg-[#555]"><Icon className="h-2 w-2" box="0 0 8 8"><path d="M4 0v8M0 4h8" strokeWidth="2" /></Icon></button>
      </div>
      <div className="ml-auto flex items-start gap-px pr-px text-white">
        <StatusGroup><button className="w-[26px] pb-[2px] whitespace-nowrap">모형</button></StatusGroup>
        <StatusGroup>
          <StatusButton name="그리드" on width="w-[22px]"><Icon><path d="M4 0v16M8 0v16M12 0v16M0 4h16M0 8h16M0 12h16" stroke="#fff" /></Icon></StatusButton>
          <StatusButton name="스냅" width="w-[26px]"><Icon><path d="M2 3h14M2 8h14M2 13h14" strokeWidth="2" strokeDasharray="2 3" /></Icon></StatusButton>
          <StatusButton name="스냅 설정" width="w-3">{arrow}</StatusButton>
        </StatusGroup>
        <StatusGroup>
          <StatusButton name="직교"><Icon><path d="M1.500 0v14.500H16M1.500 9.500h5v5" /></Icon></StatusButton>
          <StatusButton name="극좌표"><Icon><circle cx="7" cy="8.500" r="6" /><path d="M7 8.500h9M7 8.500l6-7M11 5c1 1 1.500 2 1.500 3.500" /></Icon></StatusButton>
          <StatusButton name="극좌표 설정" width="w-[14px]">{arrow}</StatusButton>
          <StatusButton name="등각투영"><Icon><path d="M8 0v16" stroke={G} /><path d="M2 2l12 12" stroke={R} /><circle cx="8" cy="8" r="1.500" fill="#555" /></Icon></StatusButton>
          <StatusButton name="등각투영 설정" width="w-5">{arrow}</StatusButton>
          <StatusButton name="객체스냅 추적" on width="w-[22px]"><Icon><path d="M16 14.500H1L14 1" stroke="#fff" /><circle cx="7" cy="9" r="1.500" fill="#fff" /></Icon></StatusButton>
          <span className="w-[2px]" />
          <StatusButton name="객체 스냅" on width="w-[22px]"><Icon><path d="M5 3h10v12H3V5" stroke="#fff" /><path d="M.6.600h4v4h-4z" stroke="#fff" /></Icon></StatusButton>
          <StatusButton name="객체 스냅 설정" width="w-[14px]">{arrow}</StatusButton>
        </StatusGroup>
        <StatusGroup>
          <StatusButton name="주석 표시" on width="w-[22px]"><Person color="#fff"><circle cx="13.500" cy="3" r="2.200" stroke="#fff" /></Person></StatusButton>
          <StatusButton name="자동 축척" width="w-[25px]"><Person color={L}><path d="M14 0l-3 3h3l-3 3" stroke="#fff" /></Person></StatusButton>
          <StatusButton name="주석"><Person color={L} /></StatusButton>
          <button className="flex h-[23px] w-[31px] items-center justify-center gap-1 pb-px font-['Open_Sans'] text-[11px]">1:1 {arrow}</button>
        </StatusGroup>
        <StatusGroup>
          <StatusButton name="작업공간"><Icon><circle cx="8" cy="8" r="4" strokeWidth="3.500" /><circle cx="8" cy="8" r="6.700" strokeWidth="2.500" strokeDasharray="2.630 2.630" /></Icon></StatusButton>
          <StatusButton name="작업공간 목록" width="w-[13px]">{arrow}</StatusButton>
        </StatusGroup>
        <StatusGroup><StatusButton name="주석 감시" width="w-[22px]"><Icon><path d="M8 0v16M0 8h16" strokeWidth="1.600" /></Icon></StatusButton></StatusGroup>
        <StatusGroup><StatusButton name="객체 분리" width="w-[22px]"><Icon><path d="M1 1.500h6v6H1z" /><circle cx="12.500" cy="7" r="3" /><path d="M6.500 10l3 5h-6z" /></Icon></StatusButton></StatusGroup>
        <StatusGroup>
          <StatusButton name="화면 정리" width="w-[23px]"><Icon><path d="M.6 2.500h14.800v11.500H.6z" /><path d="M9 7.500 13 4.500M10 4.500h3v3M7 9l-4 3M6 12H3V9" /></Icon></StatusButton>
          <StatusButton name="사용자화" width="w-[23px]"><Icon><path d="M0 2h16M0 8h16M0 14h16" stroke="#fff" strokeWidth="2" /></Icon></StatusButton>
        </StatusGroup>
      </div>
    </footer>
  );
}

export default function App() {
  return (
    <div className="flex min-h-screen flex-col border-x border-l-[#2b7ba0] border-r-[#55606a] bg-[#363636] font-['Noto_Sans_CJK_KR',sans-serif] text-[13px] leading-4">
      <TitleBar />
      <MenuBar />
      <RibbonTabs />
      <div className="flex h-[100px] overflow-hidden border-t border-b border-t-[#2e2e2e] border-b-[#8a8a8a] bg-[#5f5f5f] pl-[2px] text-[#f2f2f2]">
        <DrawPanel />
        <ModifyPanel />
        <AnnotationPanel />
        <LayersPanel />
        <BlockPanel />
        <PropertiesPanel />
        <GroupPanel />
        <UtilitiesPanel />
        <ClipboardPanel />
        <ViewPanel />
        <div className="flex-1 bg-[#474747]" />
      </div>
      <div className="flex h-[29px] items-end border-b-4 border-[#5f5f5f] pl-4">
        <DocTab label="시작" />
        <DocTab label="Drawing1*" active />
        <button aria-label="새 도면" className="mb-[3px] ml-1 flex h-[15px] w-[22px] items-center justify-center rounded-tr-[8px] rounded-bl-[8px] bg-[#555]"><Icon className="h-2 w-2" box="0 0 8 8"><path d="M4 0v8M0 4h8" strokeWidth="2" /></Icon></button>
      </div>
      <Canvas />
      <StatusBar />
    </div>
  );
}
